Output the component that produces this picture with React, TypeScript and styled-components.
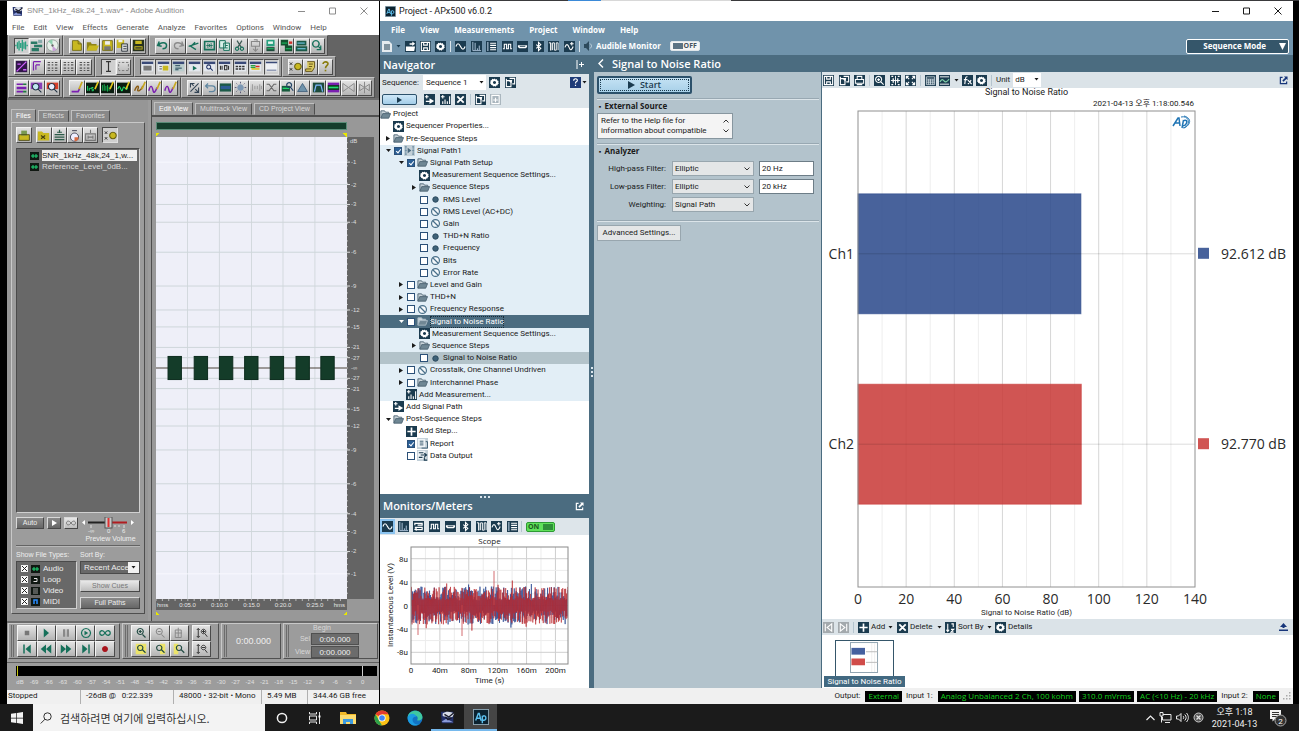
import React from 'react';
import styled, { createGlobalStyle, css } from 'styled-components';

const UI = 'Roboto, "Noto Sans CJK KR", sans-serif';
const HEAD = '"Open Sans", "Noto Sans CJK KR", sans-serif';
const OLD = '"Liberation Sans", "Noto Sans CJK KR", sans-serif';

const Global = createGlobalStyle`
  * { box-sizing: border-box; }
  body { margin: 0; background: #000; font-family: ${UI}; font-size: 8px; line-height: 12px; color: #1a1a1a; overflow: hidden; }
  button, input, select { font: inherit; color: inherit; margin: 0; padding: 0; border-radius: 0; }
  svg { display: block; flex: none; }
  h1, h2, p, ul { margin: 0; padding: 0; font: inherit; }
  ul { list-style: none; }
  a { color: inherit; text-decoration: none; }
`;

/* ---------- icons ---------- */

type Stroke = [d: string, color: string, width?: number];

const T = '#16705a';
const Y = '#c8b820';
const K = '#16202a';
const P = '#7a1fb0';
const N = '#1c7a3c';
const L = '#20e070';

const toolArt: Record<string, Stroke[]> = {
  wave: [['M1 7v2M3 4v8M5 2v12M7 5v6M9 1v14M11 4v8M13 3v10M15 7v2', '#2aa080', 1.6]],
  multi: [['M1 3h8v3H1zM5 7h10v3H5zM2 11h9v4H2z', '#2a7a66'], ['M10 1h5v4h-5z', '#8aa']],
  cd: [['M8 1a7 7 0 1 0 .01 0z', '#e8f0ea'], ['M8 1a7 7 0 1 0 .01 0z', '#8a9a90', 1], ['M8 8L3 3a7 7 0 0 1 5-2z', '#8fd0b0'], ['M8 8l5 5a7 7 0 0 1-5 2z', '#c9a0d8'], ['M8 6.500a1.500 1.500 0 1 0 .01 0z', '#666']],
  doc: [['M3 2h7l4 4v8H3z', Y], ['M3 2h7l4 4v8H3zM10 2v4h4', '#6c6410', 1]],
  folder: [['M1 4h5l1 2h6v8H1z', '#8f8418'], ['M4 8h12l-3 6H1z', Y]],
  save: [['M2 2h12v12H2z', Y], ['M5 2h6v5H5z', '#eee'], ['M4 9h8v5H4z', '#777'], ['M2 2h12v12H2z', '#6c6410', 1]],
  saveAs: [['M1 1h9v10H1z', Y], ['M3 1h5v3H3z', '#eee'], ['M7 6h7v9H7z', '#ddd'], ['M7 6h7v9H7zM9 9h4M9 12h4', K, 1]],
  saveAll: [['M1 1h14v14H1z', '#26301c'], ['M4 2h8v4H4zM3 9h10v4H3z', Y], ['M4 11h8', K, 1.5]],
  undo: [['M4 3L2 8l5 1M3 8c3-5 10-4 10 0 0 3-3 4-5 4', T, 1.8]],
  redo: [['M12 3l2 5-5 1M13 8c-3-5-10-4-10 0 0 3 3 4 5 4', '#8a8a8a', 1.6]],
  snip: [['M2 9l12-4M3 8l8 5M10 4l-5 5', T, 1.7]],
  trim: [['M2 3h12v10H2z', T, 2], ['M4 8h8M6 5v6M8 6v4M10 5v6', T, 1]],
  copy: [['M2 2h7v9H2zM7 5h7v9H7z', '#d8f0e8'], ['M2 2h7v9H2zM7 5h7v9H7zM9 8h3M9 11h3', T, 1.2]],
  cut: [['M5 2l5 8M11 2L6 10', '#3f5a55', 1.5], ['M5 10a2 2 0 1 0 .01 0zM11 10a2 2 0 1 0 .01 0z', T, 1.4]],
  paste: [['M3 3h10v6H3zM6 1h4v3M8 9v5M5 12l3 3 3-3', '#888', 1.3]],
  pasteNew: [['M3 1h10v8H3z', '#29a080'], ['M5 3h6v3H5z', '#e8f8f0'], ['M3 10h10v5H3z', '#1c4a3a'], ['M4 12h8', L, 1]],
  mix: [['M1 1h9v7H1zM6 8h9v7H6z', '#14502f'], ['M2 5h7M7 12h7', L, 1], ['M11 3h4v3h-4z', '#d0302a']],
  convert: [['M2 2h12v6H2zM1 9h14v6H1z', '#1c5a48'], ['M3 5h9M3 12h10', '#7fd8ff', 1.2]],
  zoomSel: [['M6 2a4 4 0 1 0 .01 0z', T, 1.8], ['M9 9l3 3M12 8v5H7', T, 1.5]],
  levels: [['M1 1h14v14H1z', '#31164a'], ['M2 14L14 2M3 5h4M10 12h4', '#d060ff', 1.6]],
  corner: [['M3 2h9M3 2v11M6 6h5M6 6v6', P, 1.4]],
  grid: [['M2 3h3M7 3h2M11 3h3M2 6h3M7 6h2M11 6h3M2 10h3M7 10h2M11 10h3M2 13h3M7 13h2M11 13h3', '#555', 1.3]],
  beam: [['M5 2h6M5 14h6M8 2v12', '#333', 1.4]],
  marquee: [['M2 3h2M6 3h3M11 3h3M2 13h2M6 13h3M11 13h3M2 5v3M14 5v3M2 10v2M14 10v2', '#777', 1.2]],
  win: [['M1 2h14v12H1z', '#e4e8ee'], ['M1 2h14v3H1z', '#3a4a78'], ['M3 7h10v6H3z', '#777']],
  winY: [['M1 2h14v12H1z', '#e4e8ee'], ['M1 2h14v3H1z', '#3a4a78'], ['M7 7h7v6H7z', Y], ['M3 8h3M3 11h3', '#777', 1.5]],
  winK: [['M1 2h14v12H1z', '#b9cccc'], ['M1 2h14v3H1z', '#3a4a78'], ['M4 7h6M4 10h8M4 12h4', '#245', 1.2]],
  winPlay: [['M1 2h14v12H1z', '#e4e8ee'], ['M1 2h14v3H1z', '#3a4a78'], ['M6 7l5 3-5 3z', T]],
  winZoom: [['M1 2h14v12H1z', '#e4e8ee'], ['M1 2h14v3H1z', '#3a4a78'], ['M7 6a2.500 2.500 0 1 0 .01 0zM9 10l3 3', '#236', 1.3]],
  winNum: [['M1 2h14v12H1z', '#e4e8ee'], ['M1 2h14v3H1z', '#3a4a78'], ['M3 7v5M5 7v5M8 7v5h3V7zM13 7v5', '#333', 1.4]],
  winDots: [['M1 2h14v12H1z', '#e4e8ee'], ['M1 2h14v3H1z', '#3a4a78'], ['M2 8h3M6 8h3M10 8h3M2 11h3M6 11h3M10 11h3', '#333', 2]],
  winBars: [['M1 2h14v12H1z', '#e4e8ee'], ['M1 2h14v3H1z', '#3a4a78'], ['M2 7h6M2 9h6', '#2aa040', 1.5], ['M8 8h5', '#d83020', 2], ['M3 11h10', '#d8c020', 2]],
  winLine: [['M1 2h14v12H1z', '#eef0f4'], ['M1 2h14v2H1zM2 12h12v1H2z', '#3a4a78']],
  gears: [['M1 3l3 3M4 3L1 6M1 10l3 3M4 10l-3 3', '#333', 1.2], ['M11 4a4 4 0 1 0 .01 0z', Y], ['M11 4a4 4 0 1 0 .01 0z', '#6c6410', 1.3]],
  script: [['M4 2h9v7l-3 5H2v-3h2z', '#d8c860'], ['M4 2h9v7l-3 5H2v-3h7M6 5h5M6 8h4', '#5c4a10', 1.1]],
  help: [['M5 5c0-4 7-3 6 0-.5 2-3 2-3 5', '#8a7d10', 2], ['M7 12h2v2H7z', '#8a7d10']],
  tracks: [['M2 3h8v2H2zM2 7h12v3H2zM2 12h8v2H2z', P], ['M10 3h4v2h-4zM10 12h4v2h-4z', N]],
  zoomP: [['M1 2h14v8H1z', '#8a40b8'], ['M7 3a4 4 0 1 0 .01 0z', '#bfe8f0'], ['M7 3a4 4 0 1 0 .01 0zM10 10l4 4', '#234', 1.3]],
  zoomR: [['M1 2h14v8H1z', '#d8402a'], ['M7 3a4 4 0 1 0 .01 0z', '#e8f0ff'], ['M7 3a4 4 0 1 0 .01 0zM10 10l4 4', '#234', 1.3]],
  pen: [['M2 13h8l2-4', P, 2], ['M15 1l-4 9', '#c8a820', 2]],
  penTxt: [['M0 2h16v13H0z', '#0a1c10'], ['M2 6v6M4 9v3M4 9h2M9 8H7v2h2v2H7', L, 1.2], ['M15 1l-4 9', '#e8c820', 2]],
  penDense: [['M0 2h16v13H0z', '#0a1c10'], ['M2 5v7M4 4v8M6 6v6M8 5v8M10 7v5', '#18b050', 1.2], ['M15 1l-4 9', '#e8c820', 2]],
  penWave: [['M0 2h16v13H0z', '#0a1c10'], ['M1 10c3-10 4 8 6 0s4 6 6-2', L, 1.3], ['M15 1l-4 9', '#e8c820', 2]],
  penO: [['M2 12c3-8 6-6 4-2s5 2 6-4', '#8a5a10', 1.7], ['M15 1l-4 9', '#c8a820', 2]],
  penV: [['M1 12c2-8 4-6 5-1s3 3 5-3', P, 1.8], ['M15 1l-4 9', '#c8a820', 2]],
  arrows: [['M3 13L13 3M4 3l3 3M9 10l4 4M13 8v6H8M3 8V3h5', '#345', 1.3]],
  back: [['M2 6h8c5 0 5 7 0 7H6M5 3L2 6l3 3', '#5f86a0', 1.6]],
  block: [['M1 3h14v10H1z', '#1c5a48'], ['M2 6h12v4H2z', '#2c5c94']],
  spark: [['M8 4a4 4 0 1 0 .01 0z', '#7c98b4'], ['M8 1v2M8 13v2M1 8h2M13 8h2M3 3l1 1M12 12l1 1M13 3l-1 1M4 12l-1 1', '#446', 1]],
  arcs: [['M3 4v8M6 6v4M9 6v4M12 4v8M14 6v4', '#999', 1.2]],
  cross: [['M2 4h3l6 8h3M2 12h3l6-8h3', '#666', 1.3]],
  waveS: [['M1 6h10v7H1z', '#165a3c'], ['M2 9h8', L, 1.5], ['M10 2a3 3 0 1 0 .01 0zM12 8l3 4', '#246', 1.5]],
  tri: [['M8 3l6 10H2z', '#6f93ab'], ['M8 3l6 10H2z', '#3a5a78', 1]],
  trap: [['M1 2h14v12H1z', '#1c4a3a'], ['M3 13l2-8h6l2 8', '#7fb8ff', 1.5]],
  band: [['M1 2h14v12H1z', P], ['M1 5h14v6H1z', '#0f3a22'], ['M2 8h12', L, 2]],
  bow: [['M1 3l7 5 7-5v10L8 8l-7 5z', '#8c8c8c', 1.2]],
  bowUp: [['M2 4l6 4 6-4v8L8 8l-6 4zM8 1v14', '#888', 1.2]],
  open: [['M1 7h13v7H1z', Y], ['M4 2h7v6H4z', '#7a9a50'], ['M1 7h13v7H1z', '#444010', 1]],
  importF: [['M1 3h5l2 2h7v9H1z', Y], ['M5 8l5 4M10 8l-5 4', '#444010', 1.3]],
  down: [['M8 1v4M5 4h6M2 7h12M2 10h12M2 13h12', '#2c5c48', 1.5]],
  orb: [['M8 5a5 5 0 1 0 .01 0z', '#eef'], ['M8 5a5 5 0 1 0 .01 0zM5 2h6', '#445', 1.2], ['M8 10h5a5 5 0 0 1-5 5z', '#d86a40']],
  insert: [['M8 1v4M2 6h12v8H2zM5 10h6M5 8v4M11 8v4', '#777', 1.3]],
  stop: [['M5 5h6v6H5z', '#777']],
  play: [['M5 2l7 6-7 6z', T]],
  pause: [['M4 3h3v10H4zM9 3h3v10H9z', '#888']],
  playO: [['M8 2a6 6 0 1 0 .01 0z', T, 1.6], ['M6 5l5 3-5 3z', T]],
  loop: [['M8 8c-3-5-7-3-7 0s4 5 7 0 7-3 7 0-4 5-7 0z', T, 1.7]],
  first: [['M3 2h2v12H3zM13 2v12L6 8z', T]],
  rew: [['M8 2v12L1 8zM15 2v12L8 8z', T]],
  fwd: [['M1 2v12l7-6zM8 2v12l7-6z', T]],
  last: [['M11 2h2v12h-2zM3 2v12l7-6z', T]],
  rec: [['M8 4a4 4 0 1 0 .01 0z', '#a8141c']],
  zIn: [['M7 2a4 4 0 1 0 .01 0zM10 10l4 4M5 6h4M7 4v4', '#244c44', 1.6]],
  zOut: [['M7 2a4 4 0 1 0 .01 0zM10 10l4 4M5 6h4', '#888', 1.4]],
  zFull: [['M3 4h8v10H3zM7 1v12M3 8h9', '#888', 1.3]],
  zSel: [['M1 1h14v14H1z', '#ece46a'], ['M7 3a3.500 3.500 0 1 0 .01 0zM10 9l4 4', '#244c44', 1.6]],
  zSelR: [['M8 1h7v14H8z', '#ece46a'], ['M7 3a3.500 3.500 0 1 0 .01 0zM10 9l4 4', '#244c44', 1.6]],
  zSelL: [['M1 1h6v14H1z', '#ece46a'], ['M8 3a3.500 3.500 0 1 0 .01 0zM11 9l4 4', '#244c44', 1.6]],
  zVIn: [['M3 2v12M1 4l2-2 2 2M1 12l2 2 2-2M10 3a3 3 0 1 0 .01 0zM12 9l3 4M8 6h4M10 4v4', '#333', 1.3]],
  zVOut: [['M3 2v12M1 4l2-2 2 2M1 12l2 2 2-2M10 3a3 3 0 1 0 .01 0zM12 9l3 4M8 6h4', '#333', 1.3]],
};

const ToolIcon = ({ name, size = 13 }: { name: string; size?: number }) => (
  <svg width={size} height={size} viewBox="0 0 16 16" aria-hidden="true">
    {toolArt[name].map(([d, color, width], i) => (
      <path key={i} d={d} fill={width ? 'none' : color} stroke={width ? color : 'none'} strokeWidth={width} />
    ))}
  </svg>
);

const GEAR = 'M6 1.500l.8 1.300 1.500-.5.7 1.400 1.500.6-.5 1.400.8 1.300-1.300.8v1.300l-1.500.3-.9 1.200L6 9.800l-1.300.5-.9-1.200-1.500-.3V7.500L1 6.700l.8-1.300-.4-1.400 1.500-.6.7-1.400 1.500.5zM6 4.300a1.700 1.700 0 1 0 .01 0z';

const darkArt: Record<string, Stroke[]> = {
  open: [['M1 6h10l-1 5H1zM5 2.500h3V.5L11 3 8 5.500V4H5z', '#fff']],
  save: [['M1.500 1.500h9v9h-9zM4 1.500v3h4v-3M4 10.500v-3h4v3', '#fff', 1.2]],
  gear: [[GEAR, '#fff']],
  sine: [['M1 6c1.500-4 3-4 5 0s3.500 4 5 0', '#fff', 1.3]],
  fft: [['M2 1v9.500h9M4.500 10V2M7 10V8M9 10V5', '#b5cbe0', 1]],
  list: [['M2 1v10', '#9db4c8', 1.4], ['M4.500 2.500H11M4.500 4.800H11M4.500 7.200H11M4.500 9.500H11', '#fff', 1.2]],
  square: [['M1 8.500h1.500v-5h2.500v5h2v-5h2.500v5H11', '#fff', 1.2]],
  port: [['M1 4.500h10v2L9.500 8h-7L1 6.500z', '#fff'], ['M3 5.800h6', '#1b3b4f', 1]],
  bt: [['M3.500 4l5 4L6 10.500v-9L8.500 4l-5 4', '#fff', 1.2]],
  pulses: [['M1 2h2v8.500M3 2v8M5 2v8M5 2h2v8M9 10V2h2v8M7 10h2', '#fff', 1]],
  sineUp: [['M1 7c1.500-4 3-4 4.500 0s3 3 4.500-1', '#fff', 1.2], ['M8.500 1v4M6.500 3h4', '#fff', 1.2]],
  inout: [['M10 2.500H2v2M2 2.500h8v2H5M2 7h8v2.500H3', '#fff', 1.3], ['M4 7l-3 2 3 2z', '#fff']],
  copyp: [['M1.500 2v8.500h5V4h-5M5 1.500h5.500v6H8', '#fff', 1.2], ['M4 4l4-1-1 4z', '#fff']],
  path: [['M1 3h4M3 1v4M2 8h5', '#fff', 1.3], ['M6 4.500L11 7.500 6 11z', '#fff']],
  meas: [['M1 3h4M3 1v4M3 11V8M5.500 11V6M8 11V8M10.500 11V2.500', '#fff', 1.2]],
  x: [['M2.500 2.500l7 7M9.500 2.500l-7 7', '#fff', 2]],
  plus: [['M6 1.500v9M1.500 6h9', '#fff', 1.8]],
  pagePlus: [['M2 1.500h8v9H2zM6 4v5M3.500 6.500h5', '#fff', 1.2]],
  print: [['M3.500 5V1.500h5V5M1.500 5h9v4h-9zM3 10.500h6', '#fff', 1.1]],
  zoom: [['M5 1.500a3.300 3.300 0 1 0 .01 0zM7.500 7.500l3 3M3.500 5h3M5 3.500v3', '#fff', 1.2]],
  fit: [['M1 6h10M6 1v10', '#fff', 1], ['M3.500 3.500v5M8.500 3.500v5', '#fff', 1.4], ['M1.500 1.500h2M8.500 1.500h2M1.500 10.500h2M8.500 10.500h2', '#fff', 1.2]],
  expand: [['M1.500 1.500l3 3M10.500 1.500l-3 3M1.500 10.500l3-3M10.500 10.500l-3-3M1.500 4V1.500H4M8 1.500h2.500V4M1.500 8v2.500H4M8 10.500h2.500V8', '#fff', 1.2]],
  table: [['M1.500 2h9v8.500h-9zM1.500 4.500h9M1.500 6.500h9M1.500 8.500h9M4 4.500v6M6 4.500v6M8.500 4.500v6', '#dfe9ef', 0.8]],
  graph: [['M1 2h10M1 10h10', '#fff', 1], ['M1 7.500c2-3 3-3 4.500-1s3 1 5.500-2', '#7fd0a8', 1.3]],
  fx: [['M6 2c-2-.5-2 1-2.300 3L3 10M2 5h4M6.500 5.500l4 4.500M10 5.500L6.500 10', '#fff', 1.2]],
  sort: [['M3 2v8M1.500 8.500L3 10.500l1.500-2M7 2h2v3.500M6.500 8h3l-3 3h3', '#fff', 1.2]],
  first: [['M2.500 2v8M9.500 2v8L4.500 6z', '#fff', 1.2]],
  last: [['M9.500 2v8M2.500 2v8l5-4z', '#fff', 1.2]],
  help: [['M4 4c0-3 4.500-2.500 4 0-.3 1.200-2 1-2 3M6 8.500v1.200', '#fff', 1.3]],
  report: [['M1 1h8v9H1z', '#eef3f6'], ['M3 3.500h4M3 5.500h4M3 7.500h4M9.500 4h2v7H5', '#35556b', 1]],
  data: [['M1 1h8v9H1z', '#eef3f6'], ['M2 3h5M2 8h4M4 5.500h6M8 3.500l2.500 2L8 7.500M8 8v3h3', '#1b3b4f', 1.2]],
  sigpath: [['M1 2h2M1 6h2M1 10h2M11 2H9M11 6H9M11 10H9M2 1v10M10 1v10', '#6f8ea3', 1], ['M4 3l4 3-4 3z', '#49687d']],
};

const DarkSquare = styled.span<{ $bg?: string; $ring?: boolean }>`
  display: inline-grid;
  place-items: center;
  flex: none;
  width: 11px;
  height: 11px;
  background: ${p => p.$bg ?? '#1b3b4f'};
  ${p => p.$ring && css`box-shadow: 0 0 0 2px #8cc4f0;`}
`;

const Dark = ({ name, bg, ring }: { name: string; bg?: string; ring?: boolean }) => (
  <DarkSquare $bg={bg} $ring={ring}>
    <svg width="11" height="11" viewBox="0 0 12 12" aria-hidden="true">
      {darkArt[name].map(([d, color, width], i) => (
        <path key={i} d={d} fillRule="evenodd" fill={width ? 'none' : color} stroke={width ? color : 'none'} strokeWidth={width} />
      ))}
    </svg>
  </DarkSquare>
);

const FolderIcon = ({ light }: { light?: boolean }) => (
  <svg width="11" height="11" viewBox="0 0 12 12" aria-hidden="true">
    <path d="M1 10V2h4l1 1.500h3.500V5" fill="#c9d3d9" stroke={light ? '#a9bac5' : '#4f6675'} />
    <path d="M1 10l2-5h8.500L9.500 10z" fill="#6f8794" stroke={light ? '#a9bac5' : '#4f6675'} />
  </svg>
);
const DotIcon = () => (
  <svg width="11" height="11" viewBox="0 0 12 12" aria-hidden="true"><circle cx="6" cy="6" r="3" fill="#3f6278" stroke="#27465a" /></svg>
);
const NoneIcon = () => (
  <svg width="11" height="11" viewBox="0 0 12 12" aria-hidden="true"><circle cx="6" cy="6" r="4.300" fill="#f4f8fb" stroke="#4a708a" strokeWidth="1.300" /><path d="M3 3l6 6" stroke="#4a708a" strokeWidth="1.300" /></svg>
);
const Caret = ({ color = '#1a1a1a' }: { color?: string }) => (
  <svg width="5" height="3" viewBox="0 0 5 3" aria-hidden="true"><path d="M.5 0h4L2.500 2.500z" fill={color} /></svg>
);
const PopOut = ({ color }: { color: string }) => (
  <svg width="9" height="9" viewBox="0 0 10 10" aria-hidden="true">
    <path d="M4 1.500H1.500v7h7V6" fill="none" stroke={color} strokeWidth="1.300" />
    <path d="M5.500.5H9.500v4L8.200 3.200 5 6.400 3.700 5.100 6.900 1.900z" fill={color} />
  </svg>
);
const ApLogo = ({ size }: { size: number }) => (
  <svg width={size} height={size} viewBox="0 0 18 18" aria-hidden="true">
    <rect x=".5" y=".5" width="17" height="17" fill="#0b2230" stroke="#8fa9b8" />
    <path d="M3 13l3-8h1l2 8M4 10.500h4M10.500 16V7.500M10.500 9c1-2 4-1.800 4 1s-3 3.500-4 1.800" fill="none" stroke="#5cc0ee" strokeWidth="1.600" />
  </svg>
);
const AuditionLogo = ({ size }: { size: number }) => (
  <svg width={size} height={size} viewBox="0 0 18 18" aria-hidden="true">
    <path d="M1 3h14v13H2z" fill="#23306a" />
    <path d="M2 14l5-3 8 4H3z" fill="#8a9ad8" />
    <path d="M3 5c4-3 9-2 13 0l-2 4c-4 1-8 0-11-1z" fill="#d8dde8" />
    <path d="M5 6l5 3 6-5M6 9l3 3 4-2" fill="none" stroke="#1a1c2c" strokeWidth="1.600" />
  </svg>
);
const WindowGlyph = ({ kind }: { kind: 'min' | 'max' | 'close' }) => (
  <svg width="8" height="8" viewBox="0 0 8 8" aria-hidden="true">
    <path d={{ min: 'M0 4.500h7', max: 'M.5 1h6v6h-6z', close: 'M.5.5l7 7M7.500.5l-7 7' }[kind]} fill="none" stroke="currentColor" />
  </svg>
);

/* ---------- desktop ---------- */

const Desktop = styled.div`
  display: flex;
  flex-direction: column;
  height: 100vh;
  background: #000;
`;
const TopEdge = styled.div`
  flex: none;
  height: 1px;
  background: linear-gradient(90deg, #3a3a3c 0 568px, #3b8ad8 568px 601px, #d8d8d8 601px 731px, #3a3a3c 731px);
`;
const Windows = styled.main`
  flex: 1;
  min-height: 0;
  display: flex;
  padding: 0 6px 0 7px;
  gap: 1px;
`;
const TitleBar = styled.header<{ $dim?: boolean; $h: number }>`
  flex: none;
  display: flex;
  align-items: center;
  gap: 3px;
  height: ${p => p.$h}px;
  padding: 0 11px 0 5px;
  background: #fff;
  color: ${p => (p.$dim ? '#8c8c8c' : '#1a1a1a')};
  font-size: ${p => (p.$dim ? 8 : 9)}px;
`;
const WindowButtons = styled.div`
  display: flex;
  gap: 23px;
  margin-left: auto;
`;
const PlainButton = styled.button`
  display: inline-flex;
  align-items: center;
  gap: 2px;
  flex: none;
  border: 0;
  background: none;
  cursor: pointer;
`;
const WinControls = () => (
  <WindowButtons>
    <PlainButton aria-label="Minimize"><WindowGlyph kind="min" /></PlainButton>
    <PlainButton aria-label="Maximize"><WindowGlyph kind="max" /></PlainButton>
    <PlainButton aria-label="Close"><WindowGlyph kind="close" /></PlainButton>
  </WindowButtons>
);

/* ---------- Audition ---------- */

const Audition = styled.section`
  flex: 0 0 372px;
  display: flex;
  flex-direction: column;
  min-height: 0;
  background: #9c9c9c;
  font-family: ${OLD};
`;
const OldMenu = styled.nav`
  flex: none;
  display: flex;
  align-items: center;
  gap: 9px;
  height: 15px;
  padding-left: 5px;
  background: #fff;
  color: #555;
  font-family: ${UI};
  font-size: 8px;
`;
const ToolRows = styled.div`
  flex: none;
  background: #646464;
`;
const ToolRow = styled.div`
  display: flex;
  height: 21px;
  padding-left: 1px;
`;
const ToolPanel = styled.div<{ $w: number }>`
  display: flex;
  align-items: center;
  width: ${p => p.$w}px;
  padding: 0 2px 0 5px;
  background: #a0a0a0;
  border: 1px solid;
  border-color: #c4c4c4 #505050 #505050 #c4c4c4;
`;
const ToolButton = styled.button<{ $down?: boolean; $h?: number }>`
  flex: 1;
  min-width: 0;
  height: ${p => p.$h ?? 16}px;
  display: grid;
  place-items: center;
  overflow: hidden;
  border: 1px solid;
  border-color: ${p => (p.$down ? '#4a4a4a #e0e0e0 #e0e0e0 #4a4a4a' : '#f4f4f4 #4a4a4a #4a4a4a #f4f4f4')};
  background: ${p => (p.$down ? '#cfcfcf' : 'linear-gradient(#e2e2e2, #b4b4b4)')};
`;
const OldMain = styled.div`
  flex: 1;
  min-height: 0;
  display: flex;
  border-top: 2px solid #6e6e6e;
`;
const FilesColumn = styled.div`
  flex: 0 0 141px;
  display: flex;
  flex-direction: column;
  padding: 9px 3px 7px 4px;
  background: #969696;
`;
const Tabs = styled.div`
  display: flex;
  align-items: flex-end;
  gap: 2px;
  flex: none;
`;
const Tab = styled.button<{ $on?: boolean }>`
  flex: none;
  height: ${p => (p.$on ? 13 : 12)}px;
  padding: 0 4px;
  border: 1px solid;
  border-color: #c0c0c0 #4e4e4e transparent #c0c0c0;
  background: ${p => (p.$on ? '#9a9a9a' : '#888')};
  color: ${p => (p.$on ? '#fff' : '#dadada')};
  font-size: 7px;
  line-height: 10px;
`;
const FilesPanel = styled.div`
  flex: 1;
  min-height: 0;
  display: flex;
  flex-direction: column;
  padding: 4px;
  border: 1px solid;
  border-color: #c8c8c8 #4e4e4e #4e4e4e #c8c8c8;
  background: #9c9c9c;
`;
const FileTools = styled.div`
  display: flex;
  gap: 4px;
  flex: none;
  height: 21px;
`;
const FileToolSet = styled.div<{ $w: number }>`
  display: flex;
  width: ${p => p.$w}px;
`;
const FileList = styled.ul`
  flex: 1;
  padding: 1px 2px 0 13px;
  border: 1px solid;
  border-color: #4a4a4a #d0d0d0 #d0d0d0 #4a4a4a;
  background: #686868;
`;
const FileItem = styled.li<{ $on?: boolean }>`
  display: flex;
  align-items: center;
  gap: 3px;
  height: 11px;
  color: #dcdcdc;
  font-size: 8px;
  line-height: 11px;
  white-space: nowrap;
  span { ${p => p.$on && css`flex: 1; background: #f0f0f0; color: #222;`} }
`;
const MiniIcon = ({ kind = 'wave' }: { kind?: string }) => (
  <svg width="9" height="8" viewBox="0 0 9 8" aria-hidden="true">
    <rect width="9" height="8" fill="#101812" />
    {kind === 'wave' && <path d="M1 4h7M3 2v4M6 2v4" stroke="#20d878" />}
    {kind === 'loop' && <path d="M3 2.500h3v3H2.500" stroke="#ddd" fill="none" />}
    {kind === 'video' && <path d="M2 2h5M2 4h5M2 6h5" stroke="#999" />}
    {kind === 'midi' && <path d="M3 6V2h3v4" stroke="#2a8cff" strokeWidth="1.500" fill="none" />}
  </svg>
);
const PreviewRow = styled.div`
  flex: none;
  display: flex;
  align-items: flex-start;
  gap: 3px;
  height: 34px;
  padding-top: 4px;
  border-bottom: 2px groove #b8b8b8;
`;
const OldButton = styled.button<{ $w?: number; $light?: boolean }>`
  flex: none;
  width: ${p => (p.$w ? `${p.$w}px` : '100%')};
  height: 12px;
  border: 1px solid;
  border-color: #d8d8d8 #484848 #484848 #d8d8d8;
  background: ${p => (p.$light ? 'linear-gradient(#e8e8e8, #bdbdbd)' : 'linear-gradient(#8a8a8a, #666)')};
  color: ${p => (p.$light ? '#777' : '#eee')};
  font-size: 7px;
  line-height: 10px;
`;
const VolumeBox = styled.div`
  flex: 1;
  color: #eee;
  font-size: 7px;
  line-height: 9px;
  text-align: center;
`;
const Options = styled.div`
  flex: none;
  display: grid;
  grid-template-columns: 61px 1fr;
  column-gap: 3px;
  padding-top: 2px;
  color: #eee;
  font-size: 7px;
`;
const TypeBox = styled.div`
  padding: 1px 4px;
  border: 1px solid;
  border-color: #4a4a4a #d0d0d0 #d0d0d0 #4a4a4a;
  background: #686868;
`;
const TypeLabel = styled.label`
  display: flex;
  align-items: center;
  gap: 3px;
  font-size: 8px;
  line-height: 11px;
`;
const XBox = styled.input`
  appearance: none;
  width: 7px;
  height: 7px;
  border: 1px solid #f2f2f2;
  background:
    linear-gradient(45deg, transparent 42%, #222 42% 58%, transparent 58%),
    linear-gradient(-45deg, transparent 42%, #222 42% 58%, transparent 58%), #fff;
`;
const SortStack = styled.div`
  display: flex;
  flex-direction: column;
  justify-content: space-between;
`;
const SelectWrap = styled.span<{ $w?: number; $h?: number; $right?: number }>`
  position: relative;
  display: block;
  flex: none;
  width: ${p => (p.$w ? `${p.$w}px` : '100%')};
  height: ${p => p.$h ?? 14}px;
  > svg { position: absolute; right: ${p => p.$right ?? 4}px; top: 50%; margin-top: -2px; pointer-events: none; }
`;
const BareSelect = styled.select<{ $bg: string; $border?: string; $pad?: number }>`
  appearance: none;
  width: 100%;
  height: 100%;
  padding: 0 0 0 ${p => p.$pad ?? 3}px;
  border: ${p => (p.$border ? `1px solid ${p.$border}` : '0')};
  background: ${p => p.$bg};
  font-size: 8px;
`;
const SortArrow = styled.span`
  position: absolute;
  right: 1px;
  top: 1px;
  display: grid;
  place-items: center;
  width: 11px;
  height: 11px;
  background: #f2f2f2;
  pointer-events: none;
`;

const EditColumn = styled.div`
  flex: 1;
  min-width: 0;
  display: flex;
  flex-direction: column;
  margin-left: 3px;
  padding: 2px 4px 0 2px;
  border-left: 1px solid #4e4e4e;
  background: #989898;
`;
const EditBody = styled.div`
  flex: 1;
  min-height: 0;
  display: grid;
  grid-template-columns: 1fr 27px;
  grid-template-rows: 8px 7px 1fr 11px 6px;
  margin: 0 -4px 0 -2px;
  padding: 5px 5px 5px 4px;
  border-top: 2px solid #505050;
`;
const Overview = styled.div`
  grid-column: 1;
  border: 1px solid #5a8c78;
  background: #143e2c;
`;
const Marks = styled.div<{ $low?: boolean }>`
  grid-column: 1;
  height: 4px;
  align-self: ${p => (p.$low ? 'center' : 'end')};
  background:
    linear-gradient(${p => (p.$low ? '45deg' : '135deg')}, #e8e800 50%, transparent 50%) left / 4px 4px no-repeat,
    linear-gradient(${p => (p.$low ? '-45deg' : '-135deg')}, #e8e800 50%, transparent 50%) right / 4px 4px no-repeat;
`;
const FillSvg = styled.svg`
  width: 100%;
  height: 100%;
  min-height: 0;
  overflow: visible;
`;
const WaveCell = styled.div<{ $bg: string; $col: number; $row: number }>`
  grid-column: ${p => p.$col};
  grid-row: ${p => p.$row};
  min-height: 0;
  background: ${p => p.$bg};
  overflow: hidden;
`;

const dbMarks = [1, 2, 3, 4, 6, 9, 12, 15, 21, 27];
const level = (db: number) => 50 * Math.pow(10, -db / 20);
const timeMarks = [16.5, 33.2, 50, 66.5, 83.2];
const pulses = [6.3, 20, 33.2, 46.4, 59.8, 73.3, 86.3];

const WaveView = () => (
  <EditBody>
    <Overview />
    <Marks />
    <WaveCell $bg="#eeeff8" $col={1} $row={3}>
      <FillSvg>
        {timeMarks.map(x => <line key={x} x1={`${x}%`} x2={`${x}%`} y1="0" y2="100%" stroke="#d3d9de" />)}
        {dbMarks.map(db => (
          <g key={db} stroke={db === 1 ? '#f8f8ff' : '#ced6da'}>
            <line x1="0" x2="100%" y1={`${50 - level(db)}%`} y2={`${50 - level(db)}%`} />
            <line x1="0" x2="100%" y1={`${50 + level(db)}%`} y2={`${50 + level(db)}%`} />
          </g>
        ))}
        <line x1="0" x2="100%" y1="50%" y2="50%" stroke="#4a4238" />
        {pulses.map(x => <rect key={x} x={`${x}%`} y="47.500%" width="7%" height="5%" fill="#143c29" stroke="#0d2c1e" />)}
      </FillSvg>
    </WaveCell>
    <WaveCell $bg="#646464" $col={2} $row={3}>
      <FillSvg fontSize="6" fill="#dcdcdc" fontFamily={OLD}>
        <text x="3" y="6">dB</text>
        {dbMarks.flatMap(db => [-1, 1].map(s => (
          <g key={db * s}>
            <line x1="0" x2="3" y1={`${50 + s * level(db)}%`} y2={`${50 + s * level(db)}%`} stroke="#ddd" />
            <text x="4" y={`${50 + s * level(db)}%`} dy="2">-{db}</text>
          </g>
        )))}
        {Array.from({ length: 80 }, (_, i) => <line key={i} x1="0" x2="1" y1={`${i * 1.25}%`} y2={`${i * 1.25}%`} stroke="#bbb" />)}
        <text x="4" y="50%" dy="2">-∞</text>
      </FillSvg>
    </WaveCell>
    <WaveCell $bg="#646464" $col={1} $row={4}>
      <FillSvg fontSize="6" fill="#e4e4e4" fontFamily={OLD}>
        {Array.from({ length: 30 }, (_, i) => <line key={i} x1={`${i * 3.33}%`} x2={`${i * 3.33}%`} y1="0" y2="2" stroke="#bbb" />)}
        <text x="1" y="8">hms</text>
        {timeMarks.map((x, i) => <text key={x} x={`${x}%`} y="8" textAnchor="middle">{`0:${String((i + 1) * 5).padStart(2, '0')}.0`}</text>)}
        <text x="100%" dx="-2" y="8" textAnchor="end">hms</text>
      </FillSvg>
    </WaveCell>
    <Marks $low />
  </EditBody>
);

const Transport = styled.div`
  flex: none;
  display: flex;
  gap: 2px;
  height: 41px;
  padding: 0 1px 3px;
  border-top: 2px solid #6a6a6a;
`;
const TransportPanel = styled.div<{ $w?: number }>`
  flex: ${p => (p.$w ? `0 0 ${p.$w}px` : '1')};
  display: flex;
  align-items: center;
  gap: 3px;
  padding: 0 3px 0 2px;
  border: 1px solid;
  border-color: #c8c8c8 #505050 #505050 #c8c8c8;
`;
const Grip = styled.span`
  flex: none;
  width: 3px;
  height: 32px;
  border-left: 1px solid #6c6c6c;
  border-right: 1px solid #6c6c6c;
`;
const ButtonGrid = styled.div<{ $cols: number; $w: number }>`
  display: grid;
  grid-template-columns: repeat(${p => p.$cols}, 1fr);
  width: ${p => p.$w}px;
`;
const TimeText = styled.output`
  margin: auto;
  color: #eee;
  font-size: 9px;
`;
const SelView = styled.div`
  display: grid;
  grid-template-columns: 18px 48px;
  gap: 1px;
  color: #d8d8d8;
  font-size: 7px;
  line-height: 8px;
  align-items: center;
  text-align: right;
`;
const SelHead = styled.span`
  grid-column: 1 / -1;
  padding-right: 28px;
`;
const TimeField = styled.input`
  width: 48px;
  height: 12px;
  border: 1px solid #505050;
  background: #6c6c6c;
  color: #f0f0f0;
  font-size: 8px;
  text-align: center;
`;
const Meter = styled.div`
  flex: none;
  height: 28px;
  padding: 3px 2px 0 9px;
  border-top: 1px solid #606060;
`;
const MeterBar = styled.div`
  height: 10px;
  background: linear-gradient(90deg, #000 1px, #c8c810 1px 2px, #000 2px 346px, #ccc 346px 347px, #000 347px);
`;
const MeterScale = styled.div`
  display: flex;
  justify-content: space-between;
  margin-right: 10px;
  color: #e0e0e0;
  font-size: 6px;
  line-height: 12px;
  span { flex: 0 0 8px; text-align: center; white-space: nowrap; }
`;
const OldStatus = styled.footer`
  flex: none;
  display: flex;
  gap: 2px;
  height: 14px;
  background: #f0f0f0;
  font-family: ${UI};
  font-size: 8px;
`;
const StatusCell = styled.span<{ $w: number }>`
  width: ${p => p.$w}px;
  padding-left: 3px;
  border-right: 1px solid #b0b0b0;
  white-space: nowrap;
  &:first-child { padding-left: 1px; }
  &:last-child { border: 0; }
`;

const toolRows: { w: number; icons: string; down?: number }[][] = [
  [{ w: 55, icons: 'wave multi cd', down: 1 }, { w: 86, icons: 'doc folder save saveAs saveAll' }, { w: 179, icons: 'undo redo snip trim copy cut paste pasteNew mix convert zoomSel' }],
  [{ w: 87, icons: 'levels corner grid grid grid' }, { w: 39, icons: 'beam marquee', down: 1 }, { w: 148, icons: 'win winY winK winPlay winZoom winNum winDots winBars winLine', down: 9 }, { w: 54, icons: 'gears script help' }],
  [{ w: 55, icons: 'tracks zoomP zoomR' }, { w: 118, icons: 'pen penTxt penDense penWave penO penV penV' }, { w: 194, icons: 'arrows back block spark arcs cross waveS tri trap band bow bowUp' }],
];

const AuditionWindow = () => (
  <Audition>
    <TitleBar $dim $h={19}><AuditionLogo size={12} /><h1>SNR_1kHz_48k.24_1.wav* - Adobe Audition</h1><WinControls /></TitleBar>
    <OldMenu>
      {['File', 'Edit', 'View', 'Effects', 'Generate', 'Analyze', 'Favorites', 'Options', 'Window', 'Help'].map(m => <PlainButton key={m}>{m}</PlainButton>)}
    </OldMenu>
    <ToolRows>
      {toolRows.map((row, r) => (
        <ToolRow key={r}>
          {row.map((panel, p) => (
            <ToolPanel key={p} $w={panel.w}>
              {panel.icons.split(' ').map((name, i) => (
                <ToolButton key={i} aria-label={name} $down={i < (panel.down ?? 0)}><ToolIcon name={name} /></ToolButton>
              ))}
            </ToolPanel>
          ))}
        </ToolRow>
      ))}
    </ToolRows>
    <OldMain>
      <FilesColumn>
        <Tabs><Tab $on>Files</Tab><Tab>Effects</Tab><Tab>Favorites</Tab></Tabs>
        <FilesPanel>
          <FileTools>
            <FileToolSet $w={16}><ToolButton aria-label="Open"><ToolIcon name="open" /></ToolButton></FileToolSet>
            <FileToolSet $w={62}>
              {['importF', 'down', 'orb', 'insert'].map(n => <ToolButton key={n} aria-label={n}><ToolIcon name={n} /></ToolButton>)}
            </FileToolSet>
            <FileToolSet $w={16}><ToolButton $down aria-label="Options"><ToolIcon name="gears" /></ToolButton></FileToolSet>
          </FileTools>
          <FileList>
            <FileItem $on><MiniIcon /><span>SNR_1kHz_48k,24_1,w...</span></FileItem>
            <FileItem><MiniIcon /><span>Reference_Level_0dB...</span></FileItem>
          </FileList>
          <PreviewRow>
            <OldButton $w={28}>Auto</OldButton>
            <OldButton $w={14} aria-label="Play"><svg width="12" height="8" viewBox="0 0 12 8"><path d="M4 1l5 3-5 3z" fill="#fff" /></svg></OldButton>
            <OldButton $w={14} $light aria-label="Loop"><svg width="12" height="8" viewBox="0 0 12 8"><path d="M6 4C4 1 1.500 2 1.500 4S4 7 6 4s4.500-2 4.500 0S8 7 6 4z" fill="none" stroke="#777" /></svg></OldButton>
            <VolumeBox>
              <svg width="54" height="17" viewBox="0 0 54 17" aria-hidden="true">
                <path d="M4 3v5L1 5.500zM50 3v5l3-2.500z" fill="#fff" />
                <path d="M7 5.500h20" stroke="#222" strokeWidth="2" /><path d="M27 5.500h19" stroke="#b01c20" strokeWidth="2" />
                <path d="M10 8v3M43 8v3M34 8v2M38 8v2" stroke="#ddd" />
                <rect x="24" y="0" width="7" height="11" fill="#c8c8c8" stroke="#555" /><path d="M27.500 1v9" stroke="#e03030" strokeWidth="2" />
                <text x="7" y="16" fontSize="6" fill="#eee">-∞</text><text x="26" y="16" fontSize="6" fill="#eee">0</text><text x="41" y="16" fontSize="6" fill="#eee">6</text>
              </svg>
              Preview Volume
            </VolumeBox>
          </PreviewRow>
          <Options>
            <span>Show File Types:</span><label htmlFor="sort">Sort By:</label>
            <TypeBox>
              {[['wave', 'Audio'], ['loop', 'Loop'], ['video', 'Video'], ['midi', 'MIDI']].map(([k, t]) => (
                <TypeLabel key={t}><XBox type="checkbox" defaultChecked /><MiniIcon kind={k} />{t}</TypeLabel>
              ))}
            </TypeBox>
            <SortStack>
              <SelectWrap $h={13}>
                <BareSelect id="sort" $bg="#686868" $border="#4a4a4a"><option>Recent Access</option></BareSelect>
                <SortArrow><Caret /></SortArrow>
              </SelectWrap>
              <OldButton $light>Show Cues</OldButton>
              <OldButton>Full Paths</OldButton>
            </SortStack>
          </Options>
        </FilesPanel>
      </FilesColumn>
      <EditColumn>
        <Tabs><Tab $on>Edit View</Tab><Tab>Multitrack View</Tab><Tab>CD Project View</Tab></Tabs>
        <WaveView />
      </EditColumn>
    </OldMain>
    <Transport>
      <TransportPanel $w={112}>
        <Grip />
        <ButtonGrid $cols={5} $w={98}>
          {'stop play pause playO loop first rew fwd last rec'.split(' ').map(n => <ToolButton key={n} $h={16} aria-label={n}><ToolIcon name={n} size={12} /></ToolButton>)}
        </ButtonGrid>
      </TransportPanel>
      <TransportPanel $w={97}>
        <Grip />
        <ButtonGrid $cols={3} $w={58}>
          {'zIn zOut zFull zSel zSelR zSelL'.split(' ').map(n => <ToolButton key={n} $h={16} aria-label={n}><ToolIcon name={n} size={12} /></ToolButton>)}
        </ButtonGrid>
        <ButtonGrid $cols={1} $w={19}>
          <ToolButton $h={16} aria-label="Zoom in vertically"><ToolIcon name="zVIn" size={12} /></ToolButton>
          <ToolButton $h={16} aria-label="Zoom out vertically"><ToolIcon name="zVOut" size={12} /></ToolButton>
        </ButtonGrid>
      </TransportPanel>
      <TransportPanel $w={60}><Grip /><TimeText>0:00.000</TimeText></TransportPanel>
      <TransportPanel>
        <Grip />
        <SelView>
          <SelHead>Begin</SelHead>
          <label htmlFor="sel">Sel</label><TimeField id="sel" defaultValue="0:00.000" />
          <label htmlFor="view">View</label><TimeField id="view" defaultValue="0:00.000" />
        </SelView>
      </TransportPanel>
    </Transport>
    <Meter>
      <MeterBar />
      <MeterScale>
        <span>dB</span>
        {Array.from({ length: 24 }, (_, i) => <span key={i}>{i === 23 ? 0 : i * 3 - 69}</span>)}
      </MeterScale>
    </Meter>
    <OldStatus>
      <StatusCell $w={74}>Stopped</StatusCell>
      <StatusCell $w={91}>-26dB @ &nbsp; 0:22.339</StatusCell>
      <StatusCell $w={86}>48000 • 32-bit • Mono</StatusCell>
      <StatusCell $w={44}>5.49 MB</StatusCell>
      <StatusCell $w={60}>344.46 GB free</StatusCell>
    </OldStatus>
  </Audition>
);

/* ---------- APx500 ---------- */

const Apx = styled.section`
  flex: 1;
  min-width: 0;
  display: flex;
  flex-direction: column;
  background: #4b6c80;
`;
const MenuBand = styled.div`
  flex: none;
  height: 34px;
  display: flex;
  flex-direction: column;
  background: #7093ab;
  color: #fff;
  font-family: ${HEAD};
  font-weight: 700;
`;
const MenuRow = styled.nav`
  display: flex;
  align-items: center;
  gap: 15px;
  height: 18px;
  padding-left: 11px;
  font-size: 8px;
`;
const ToolLine = styled.div`
  display: flex;
  align-items: center;
  height: 14px;
  padding: 0 4px 0 2px;
`;
const Strip = styled.div<{ $w?: number; $ml?: number }>`
  flex: none;
  display: flex;
  align-items: center;
  justify-content: space-between;
  width: ${p => (p.$w ? `${p.$w}px` : 'auto')};
  margin-left: ${p => p.$ml ?? 0}px;
`;
const Sep = styled.span<{ $m?: number; $c?: string }>`
  flex: none;
  width: 1px;
  height: 11px;
  margin: 0 ${p => p.$m ?? 3}px;
  background: ${p => p.$c ?? '#b4c4ce'};
`;
const Toggle = styled.button<{ $on?: boolean; $ml: number }>`
  flex: none;
  display: flex;
  align-items: center;
  justify-content: space-between;
  width: ${p => (p.$on ? 29 : 30)}px;
  height: 10px;
  padding: 0 ${p => (p.$on ? 1 : 2)}px;
  margin-left: ${p => p.$ml}px;
  border: 1px solid ${p => (p.$on ? '#2d9a34' : '#dfe6ea')};
  border-radius: 2px;
  background: ${p => (p.$on ? '#5fe05a' : '#f4f4f4')};
  color: ${p => (p.$on ? '#1c5a20' : '#44525c')};
  font-family: ${HEAD};
  font-size: 7px;
  font-weight: 700;
  line-height: 8px;
  i { flex: none; width: 10px; height: 6px; background: ${p => (p.$on ? '#2f8f3a' : '#5b7384')}; }
`;
const ModeButton = styled.button`
  display: flex;
  align-items: center;
  justify-content: flex-end;
  gap: 13px;
  width: 103px;
  height: 15px;
  margin-left: auto;
  padding: 0 2px;
  border: 1px solid #fff;
  border-radius: 2px;
  background: #35566a;
  font-size: 8px;
`;
const Workspace = styled.div`
  flex: 1;
  min-height: 0;
  display: flex;
`;
const Navigator = styled.aside`
  flex: 0 0 209px;
  display: flex;
  flex-direction: column;
  background: #fff;
`;
const PanelHead = styled.div<{ $h: number }>`
  position: relative;
  flex: none;
  display: flex;
  align-items: center;
  justify-content: space-between;
  height: ${p => p.$h}px;
  padding: 0 5px 0 3px;
  background: #4b6c80;
  color: #fff;
  font-family: ${HEAD};
  font-size: 11px;
  font-weight: 600;
`;
const Dots = styled.span`
  position: absolute;
  left: 50%;
  top: 2px;
  width: 11px;
  height: 2px;
  margin-left: -5px;
  background: repeating-linear-gradient(90deg, #dbe6ee 0 2px, transparent 2px 4px);
`;
const NavRow = styled.div`
  flex: none;
  display: flex;
  align-items: center;
  height: 17px;
  padding-left: 2px;
  background: #dde5ea;
`;
const PlayButton = styled.button`
  display: grid;
  place-items: center;
  width: 35px;
  height: 11px;
  border: 1px solid #2c516b;
  border-radius: 2px;
  background: linear-gradient(#cfe8f8, #a3cde8);
`;
const Tree = styled.ul`
  flex: none;
  height: 354px;
  display: flex;
  flex-direction: column;
`;
const TreeRow = styled.li<{ $level: number; $tone?: 'blue' | 'head' | 'sel' }>`
  flex: 1;
  min-height: 0;
  display: flex;
  align-items: center;
  padding-left: ${p => p.$level * 13}px;
  background: ${p => (p.$tone === 'head' ? '#4b6c80' : p.$tone === 'sel' ? '#b3c3ca' : p.$tone === 'blue' ? '#e2eef6' : '#fff')};
  color: ${p => (p.$tone === 'head' ? '#fff' : '#1a1a1a')};
  white-space: nowrap;
  label, span.text { margin-left: 2px; ${p => p.$tone === 'head' && css`outline: 1px dotted #1a2c38; outline-offset: -1px;`} }
`;
const Twisty = styled.span`
  flex: none;
  display: grid;
  place-items: center;
  width: 13px;
  padding-left: 3px;
`;
const Check = styled.input`
  appearance: none;
  flex: none;
  position: relative;
  width: 8px;
  height: 8px;
  margin: 0 2px 0 1px;
  border: 1px solid #2b5078;
  background: #fff;
  &:checked { background: #2b5f96; }
  &:checked::after {
    content: '';
    position: absolute;
    left: 2px;
    top: 0;
    width: 2px;
    height: 4px;
    border: solid #fff;
    border-width: 0 1px 1px 0;
    transform: rotate(40deg);
  }
`;

type Node = [level: number, twisty: '' | '>' | 'v' | '-', check: '' | 'o' | 'x', icon: string, text: string];
const nodes: Node[] = [
  [0, '-', '', 'folder', 'Project'],
  [0, '', '', 'gear', 'Sequencer Properties...'],
  [0, '>', '', 'folder', 'Pre-Sequence Steps'],
  [0, 'v', 'x', 'sigpath', 'Signal Path1'],
  [1, 'v', 'x', 'folder', 'Signal Path Setup'],
  [2, '', '', 'gear', 'Measurement Sequence Settings...'],
  [2, '>', '', 'folder', 'Sequence Steps'],
  [2, '', 'o', 'dot', 'RMS Level'],
  [2, '', 'o', 'none', 'RMS Level (AC+DC)'],
  [2, '', 'o', 'none', 'Gain'],
  [2, '', 'o', 'dot', 'THD+N Ratio'],
  [2, '', 'o', 'dot', 'Frequency'],
  [2, '', 'o', 'none', 'Bits'],
  [2, '', 'o', 'none', 'Error Rate'],
  [1, '>', 'o', 'folder', 'Level and Gain'],
  [1, '>', 'o', 'folder', 'THD+N'],
  [1, '>', 'o', 'none', 'Frequency Response'],
  [1, 'v', 'o', 'folderLight', 'Signal to Noise Ratio'],
  [2, '', '', 'gear', 'Measurement Sequence Settings...'],
  [2, '>', '', 'folder', 'Sequence Steps'],
  [2, '', 'o', 'dot', 'Signal to Noise Ratio'],
  [1, '>', 'o', 'none', 'Crosstalk, One Channel Undriven'],
  [1, '>', 'o', 'folder', 'Interchannel Phase'],
  [1, '', '', 'meas', 'Add Measurement...'],
  [0, '', '', 'path', 'Add Signal Path'],
  [0, 'v', '', 'folder', 'Post-Sequence Steps'],
  [1, '', '', 'plus', 'Add Step...'],
  [1, '', 'x', 'report', 'Report'],
  [1, '', 'o', 'data', 'Data Output'],
];

const NodeIcon = ({ name }: { name: string }) => {
  if (name === 'folder' || name === 'folderLight') return <FolderIcon light={name === 'folderLight'} />;
  if (name === 'dot') return <DotIcon />;
  if (name === 'none') return <NoneIcon />;
  return <Dark name={name} bg={['sigpath', 'report', 'data'].includes(name) ? '#c3d0d8' : undefined} />;
};

const NavTree = () => (
  <Tree>
    {nodes.map(([lvl, tw, check, icon, text], i) => {
      const tone = i === 17 ? 'head' : i === 20 ? 'sel' : i > 2 && i < 24 ? 'blue' : undefined;
      const fill = tone === 'head' ? '#fff' : '#1a1a1a';
      return (
        <TreeRow key={i} $level={lvl} $tone={tone}>
          {tw !== '-' && (
            <Twisty>
              {tw === '>' && <svg width="4" height="5" viewBox="0 0 4 5"><path d="M0 0l4 2.500L0 5z" fill={fill} /></svg>}
              {tw === 'v' && <svg width="5" height="3" viewBox="0 0 5 3"><path d="M0 0h5L2.500 3z" fill={fill} /></svg>}
            </Twisty>
          )}
          {check && <Check id={`node${i}`} type="checkbox" defaultChecked={check === 'x'} />}
          <NodeIcon name={icon} />
          {check ? <label htmlFor={`node${i}`}>{text}</label> : <span className="text">{text}</span>}
        </TreeRow>
      );
    })}
  </Tree>
);

const Monitors = styled.section`
  flex: none;
  background: #fff;
`;
const MonitorTools = styled.div`
  display: flex;
  align-items: center;
  height: 17px;
  padding: 0 2px;
  background: #dde5ea;
`;
const ScopeBox = styled.figure`
  position: relative;
  display: grid;
  grid-template-columns: 31px 1fr 21px;
  grid-template-rows: 12px 117px 12px;
  margin: 0;
  height: 153px;
  text-align: center;
  figcaption { grid-column: 2; line-height: 12px; font-family: ${HEAD}; }
  svg { grid-column: 2; }
`;

const noise = (seed: number) => {
  let s = seed;
  const rnd = () => { s = (s * 16807) % 2147483647; return s / 2147483647; };
  let d = 'M0 58.5';
  for (let i = 1; i < 330; i++) {
    const peak = rnd() > 0.95 ? 1.35 : 1;
    const amp = (5 + rnd() * 14) * peak * (i % 2 ? -1 : 1);
    d += `L${(i * 157 / 330).toFixed(2)} ${(58.5 + amp).toFixed(1)}`;
  }
  return d;
};
const blueNoise = noise(4127);
const redNoise = noise(90871);

const Scope = () => (
  <ScopeBox>
    <figcaption>Scope</figcaption>
    <FillSvg>
      <rect width="100%" height="100%" fill="#fff" />
      {Array.from({ length: 10 }, (_, i) => <line key={i} x1={`${i * 9.2 + 9.2}%`} x2={`${i * 9.2 + 9.2}%`} y1="0" y2="100%" stroke={i % 2 ? '#cfcfcf' : '#ececec'} />)}
      {Array.from({ length: 9 }, (_, i) => <line key={i} x1="0" x2="100%" y1={`${i * 10 + 10}%`} y2={`${i * 10 + 10}%`} stroke={i % 2 ? '#ececec' : '#cfcfcf'} />)}
      <svg width="100%" height="100%" viewBox="0 0 157 117" preserveAspectRatio="none">
        <path d={blueNoise} fill="none" stroke="#2d4b92" strokeWidth=".700" />
        <path d={redNoise} fill="none" stroke="#bb262c" strokeWidth=".600" />
        <path d="M83 58V24M7 58V88M51 58V89" stroke="#c8484c" strokeWidth=".800" />
      </svg>
      <rect width="100%" height="100%" fill="none" stroke="#8a8a8a" />
      <g fontSize="8" fill="#222" fontFamily={UI}>
        {['8u', '4u', '0', '-4u', '-8u'].map((t, i) => <text key={t} x="0" dx="-3" y={`${i * 20 + 10}%`} dy="3" textAnchor="end">{t}</text>)}
        {['0', '40m', '80m', '120m', '160m', '200m'].map((t, i) => <text key={t} x={`${i * 18.4}%`} y="100%" dy="9" textAnchor="middle">{t}</text>)}
        <text x="50%" y="100%" dy="19" textAnchor="middle">Time (s)</text>
        <text transform="translate(-18 58) rotate(-90)" textAnchor="middle">Instantaneous Level (V)</text>
      </g>
    </FillSvg>
  </ScopeBox>
);

const Divider = styled.div`
  flex: none;
  width: 5px;
  background: #4b6c80;
  display: grid;
  place-items: center;
  padding-left: 1px;
  i { width: 2px; height: 10px; background: repeating-linear-gradient(#dbe6ee 0 2px, transparent 2px 4px); }
`;
const Measure = styled.section`
  flex: 1;
  min-width: 0;
  display: flex;
  flex-direction: column;
`;
const MeasureHead = styled.div`
  flex: none;
  display: flex;
  align-items: center;
  gap: 8px;
  height: 17px;
  padding-left: 4px;
  color: #fff;
  font-family: ${HEAD};
  font-size: 11px;
  font-weight: 600;
`;
const MeasureBody = styled.div`
  flex: 1;
  min-height: 0;
  display: flex;
  gap: 1px;
`;
const Settings = styled.form`
  flex: 0 0 227px;
  padding: 4px 2px 0 3px;
  background: #b3c3cc;
`;
const StartButton = styled.button`
  display: flex;
  align-items: center;
  justify-content: center;
  gap: 5px;
  width: 95px;
  height: 18px;
  border: 2px solid #2c516b;
  border-radius: 2px;
  outline: 1px dotted #1b3b4f;
  outline-offset: -4px;
  background: linear-gradient(#c4e2f4, #a8d0e8);
  color: #1b3b4f;
  font-family: ${HEAD};
  font-size: 9px;
  font-weight: 600;
`;
const Rule = styled.hr`
  height: 2px;
  margin: 4px 0 0;
  border: 0;
  border-top: 1px solid #98a8b2;
  background: #dbe4e9;
`;
const SectionTitle = styled.h2`
  font-family: ${HEAD};
  font-weight: 700;
  font-size: 8px;
  line-height: 12px;
  &::before { content: '▪ '; font-size: 6px; }
`;
const NoteBox = styled.div`
  display: flex;
  justify-content: space-between;
  width: 136px;
  height: 26px;
  padding: 2px 3px;
  border: 1px solid #87969f;
  background: #f4f4f4;
  line-height: 10px;
`;
const Steppers = styled.div`
  display: flex;
  flex-direction: column;
  justify-content: space-around;
`;
const FieldGroup = styled.div`
  display: grid;
  row-gap: 3px;
  padding: 3px 0 4px;
`;
const Field = styled.div`
  display: grid;
  grid-template-columns: 70px 82px 55px;
  align-items: center;
  column-gap: 5px;
  label { text-align: right; padding-right: 1px; }
`;
const TextField = styled.input`
  width: 55px;
  height: 15px;
  padding-left: 2px;
  border: 1px solid #6d7d87;
  background: #fff;
`;
const AdvButton = styled.button`
  display: block;
  width: 84px;
  height: 16px;
  margin-top: 3px;
  border: 1px solid #98a6ae;
  background: #e4e6e7;
`;
const Chevron = ({ up }: { up?: boolean }) => (
  <svg width="6" height="4" viewBox="0 0 6 4" aria-hidden="true"><path d={up ? 'M.5 3.500L3 1l2.500 2.500' : 'M.5.5L3 3 5.500.5'} fill="none" stroke="#333" /></svg>
);

const GraphPane = styled.div`
  flex: 1;
  min-width: 0;
  display: flex;
  flex-direction: column;
  background: #fff;
`;
const GraphTools = styled.div`
  flex: none;
  display: flex;
  align-items: center;
  height: 16px;
  padding: 0 5px 0 1px;
  background: #dbe3e8;
`;
const GraphTitle = styled.h2`
  flex: none;
  padding-right: 62px;
  font-size: 9px;
  line-height: 9px;
  text-align: center;
`;
const GraphDate = styled.p`
  flex: none;
  padding-right: 99px;
  line-height: 13px;
  text-align: right;
`;
const PlotArea = styled.div`
  flex: 1;
  min-height: 0;
  display: flex;
  padding: 1px 98px 32px 36px;
`;

const bars = [
  { name: 'Ch1', value: 92.612, y: 30, fill: '#2d4b8c' },
  { name: 'Ch2', value: 92.77, y: 70, fill: '#c93c3a' },
];

const BarChart = () => (
  <PlotArea>
    <FillSvg fontFamily={HEAD} fontSize="14" fill="#2a2a2a">
      {Array.from({ length: 13 }, (_, i) => <line key={i} x1={`${(i + 1) * 100 / 14}%`} x2={`${(i + 1) * 100 / 14}%`} y1="0" y2="100%" stroke={i % 2 ? '#d6d6d6' : '#eeeeee'} />)}
      {bars.map(b => (
        <g key={b.name}>
          <rect x="0" y={`${b.y - 12.6}%`} width={`${b.value / 1.4}%`} height="25.200%" fill={b.fill} fillOpacity=".870" stroke={b.fill} strokeOpacity=".600" />
          <line x1="0" x2="100%" y1={`${b.y}%`} y2={`${b.y}%`} stroke="#000" strokeOpacity=".140" />
          <text x="0" dx="-4" y={`${b.y}%`} dy="5" textAnchor="end">{b.name}</text>
          <svg x="100%" y={`${b.y}%`} overflow="visible">
            <rect x="3" y="-6" width="11" height="11" fill={b.fill} fillOpacity=".870" />
            <text x="26" y="5">{b.value.toFixed(3)} dB</text>
          </svg>
        </g>
      ))}
      <rect width="100%" height="100%" fill="none" stroke="#909090" />
      {Array.from({ length: 8 }, (_, i) => <text key={i} x={`${i * 100 / 7}%`} y="100%" dy="17" textAnchor="middle">{i * 20}</text>)}
      <text x="50%" y="100%" dy="28" fontSize="8" textAnchor="middle" fontFamily={UI}>Signal to Noise Ratio (dB)</text>
      <svg x="100%" overflow="visible">
        <g fill="none" stroke="#1f74b4">
          <path d="M-22 15l5-8h1l1 8M-20 12h5M-13 17l1.500-8M-12 10c3-2 5 0 3 3-1 2-3 2-4 1" strokeWidth="1.500" />
          <path d="M-14 6c9-2 10 9 2 11M-11 5c8 2 7 9 0 12" strokeWidth="1" />
        </g>
      </svg>
    </FillSvg>
  </PlotArea>
);

const Thumbs = styled.div`
  flex: none;
  height: 53px;
  padding: 5px 0 0 2px;
`;
const Thumb = styled.a`
  display: flex;
  flex-direction: column;
  align-items: center;
  width: 81px;
  svg { border: 1px solid #35566a; border-bottom: 0; width: 59px; height: 36px; }
  span { width: 81px; background: #426981; color: #fff; line-height: 11px; text-align: center; }
`;
const ApxStatus = styled.footer`
  flex: none;
  display: flex;
  align-items: center;
  justify-content: flex-end;
  gap: 4px;
  height: 16px;
  padding-right: 2px;
  background: #f0f0f0;
`;
const Chip = styled.output<{ $gap?: boolean }>`
  margin-left: ${p => (p.$gap ? 1 : -1)}px;
  padding: 0 3px 1px;
  background: #000;
  color: #12d21c;
  font-family: ${HEAD};
  line-height: 10px;
`;

const ApxWindow = () => (
  <Apx>
    <TitleBar $h={20}><ApLogo size={11} /><h1>Project - APx500 v6.0.2</h1><WinControls /></TitleBar>
    <MenuBand>
      <MenuRow>{['File', 'View', 'Measurements', 'Project', 'Window', 'Help'].map(m => <PlainButton key={m}>{m}</PlainButton>)}</MenuRow>
      <ToolLine>
        <Strip $w={64}>
          <svg width="10" height="11" viewBox="0 0 10 11" aria-hidden="true"><path d="M0 0h7l3 3v8H0z" fill="#e4ebef" /><path d="M2 4h6M2 6h6M2 8h6" stroke="#1b3b4f" /></svg>
          <Caret color="#1b3b4f" /><Dark name="open" /><Dark name="save" /><Dark name="gear" />
        </Strip>
        <Sep $m={4} $c="#dce6ec" />
        <Strip $w={120}>{['sine', 'fft', 'list', 'square', 'port', 'bt', 'pulses', 'sineUp'].map(n => <Dark key={n} name={n} />)}</Strip>
        <Sep $m={4} $c="#dce6ec" />
        <svg width="9" height="10" viewBox="0 0 9 10" aria-hidden="true"><path d="M0 3h2l3-3v10L2 7H0z" fill="#2d4a5c" /><path d="M6 2.500c2 2 2 3 0 5" stroke="#c8d8e2" fill="none" /></svg>
        <Strip $ml={3}>Audible Monitor</Strip>
        <Toggle $ml={9}><i />OFF</Toggle>
        <ModeButton>Sequence Mode<svg width="7" height="7" viewBox="0 0 7 7"><path d="M0 0h7L3.500 7z" fill="#fff" /></svg></ModeButton>
      </ToolLine>
    </MenuBand>
    <Workspace>
      <Navigator>
        <PanelHead $h={19}>Navigator
          <svg width="8" height="9" viewBox="0 0 8 9" aria-hidden="true"><path d="M1 0v9M3 4.500h5M5.500 2v5" stroke="#fff" /></svg>
        </PanelHead>
        <NavRow>
          <label htmlFor="seq">Sequence:</label>
          <Strip $ml={4}>
            <SelectWrap $w={63} $h={15} $right={2}><BareSelect id="seq" $bg="#fff"><option>Sequence 1</option></BareSelect><Caret /></SelectWrap>
          </Strip>
          <Strip $w={27} $ml={3}><Dark name="gear" /><Dark name="copyp" /></Strip>
          <Strip $ml={54} $w={17}><Dark name="help" bg="#1f3c78" /><Caret /></Strip>
        </NavRow>
        <NavRow>
          <PlayButton aria-label="Run sequence"><svg width="5" height="6" viewBox="0 0 5 6"><path d="M0 0l5 3-5 3z" fill="#1b3b4f" /></svg></PlayButton>
          <Strip $w={42} $ml={7}><Dark name="path" /><Dark name="meas" /><Dark name="x" /></Strip>
          <Sep $m={4} />
          <Strip $w={26}><Dark name="copyp" /><Dark name="pagePlus" bg="#aab6be" /></Strip>
        </NavRow>
        <NavTree />
        <Workspace />
        <Monitors>
          <PanelHead $h={24}><Dots />Monitors/Meters<PopOut color="#fff" /></PanelHead>
          <MonitorTools>
            <Strip $w={136}>{['sine', 'fft', 'inout', 'square', 'port', 'bt', 'pulses', 'sineUp', 'list'].map((n, i) => <Dark key={n} name={n} ring={i === 0} />)}</Strip>
            <Sep $m={3} />
            <Toggle $on $ml={1}>ON<i /></Toggle>
          </MonitorTools>
          <Scope />
        </Monitors>
      </Navigator>
      <Divider><i /></Divider>
      <Measure>
        <MeasureHead>
          <svg width="6" height="9" viewBox="0 0 6 9" aria-hidden="true"><path d="M5 .5L1 4.500l4 4" stroke="#fff" strokeWidth="1.400" fill="none" /></svg>
          Signal to Noise Ratio
        </MeasureHead>
        <MeasureBody>
          <Settings onSubmit={e => e.preventDefault()}>
            <StartButton><svg width="7" height="8" viewBox="0 0 7 8"><path d="M0 0l7 4-7 4z" fill="#1b3b4f" /></svg>Start</StartButton>
            <Rule />
            <SectionTitle>External Source</SectionTitle>
            <NoteBox>
              <p>Refer to the Help file for<br />information about compatible</p>
              <Steppers><PlainButton type="button" aria-label="Scroll up"><Chevron up /></PlainButton><PlainButton type="button" aria-label="Scroll down"><Chevron /></PlainButton></Steppers>
            </NoteBox>
            <Rule />
            <SectionTitle>Analyzer</SectionTitle>
            <FieldGroup>
              <Field>
                <label htmlFor="hp">High-pass Filter:</label>
                <SelectWrap $h={15}><BareSelect id="hp" $bg="#e4e6e7" $border="#98a6ae" $pad={2}><option>Elliptic</option></BareSelect><Chevron /></SelectWrap>
                <TextField aria-label="High-pass frequency" defaultValue="20 Hz" />
              </Field>
              <Field>
                <label htmlFor="lp">Low-pass Filter:</label>
                <SelectWrap $h={15}><BareSelect id="lp" $bg="#e4e6e7" $border="#98a6ae" $pad={2}><option>Elliptic</option></BareSelect><Chevron /></SelectWrap>
                <TextField aria-label="Low-pass frequency" defaultValue="20 kHz" />
              </Field>
              <Field>
                <label htmlFor="wt">Weighting:</label>
                <SelectWrap $h={15}><BareSelect id="wt" $bg="#e4e6e7" $border="#98a6ae" $pad={2}><option>Signal Path</option></BareSelect><Chevron /></SelectWrap>
              </Field>
            </FieldGroup>
            <Rule />
            <AdvButton type="button">Advanced Settings...</AdvButton>
          </Settings>
          <GraphPane>
            <GraphTools>
              <Strip $w={42}><Dark name="save" /><Dark name="copyp" /><Dark name="print" /></Strip>
              <Sep $m={4} />
              <Strip $w={42}><Dark name="zoom" /><Dark name="fit" /><Dark name="expand" /></Strip>
              <Sep $m={4} />
              <Strip $w={62}><Dark name="table" /><Dark name="graph" /><Caret /><Dark name="fx" /><Dark name="gear" /></Strip>
              <Sep $m={4} />
              <label htmlFor="unit">Unit</label>
              <Strip $ml={3}><SelectWrap $w={28} $h={14} $right={2}><BareSelect id="unit" $bg="#fff" $pad={2}><option>dB</option></BareSelect><Caret /></SelectWrap></Strip>
              <WindowButtons><PopOut color="#16357a" /></WindowButtons>
            </GraphTools>
            <GraphTitle>Signal to Noise Ratio</GraphTitle>
            <GraphDate>2021-04-13 오후 1:18:00.546</GraphDate>
            <BarChart />
            <GraphTools>
              <Strip $w={26}><Dark name="first" bg="#a3a9ad" /><Dark name="last" bg="#a3a9ad" /></Strip>
              <Sep $m={4} />
              <Strip $w={35}><PlainButton><Dark name="plus" />Add</PlainButton><Caret /></Strip>
              <Strip $w={45} $ml={4}><PlainButton><Dark name="x" />Delete</PlainButton><Caret /></Strip>
              <Strip $w={47} $ml={3}><PlainButton><Dark name="sort" />Sort By</PlainButton><Caret /></Strip>
              <Strip $ml={3}><PlainButton><Dark name="gear" />Details</PlainButton></Strip>
              <WindowButtons><svg width="9" height="8" viewBox="0 0 9 8" aria-hidden="true"><path d="M4.500 0L8 4H5.500v1h-2V4H1zM0 6.500h9V8H0z" fill="#16357a" /></svg></WindowButtons>
            </GraphTools>
            <Thumbs>
              <Thumb href="#snr">
                <svg viewBox="0 0 59 36" aria-hidden="true">
                  <rect x="15" y="1.500" width="28" height="31" fill="#fff" stroke="#8fa3b0" />
                  <path d="M37 2v30M40 2v30" stroke="#eee" /><path d="M31 11h12M31 22h12" stroke="#bbb" />
                  <rect x="16" y="7" width="14" height="7" fill="#44609f" /><rect x="16" y="18" width="14" height="7" fill="#d04c4a" />
                </svg>
                <span>Signal to Noise Ratio</span>
              </Thumb>
            </Thumbs>
          </GraphPane>
        </MeasureBody>
      </Measure>
    </Workspace>
    <ApxStatus>
      Output: <Chip $gap>External</Chip> Input 1: <Chip $gap>Analog Unbalanced 2 Ch, 100 kohm</Chip><Chip>310.0 mVrms</Chip><Chip>AC (&lt;10 Hz) - 20 kHz</Chip> Input 2: <Chip $gap>None</Chip>
      <svg width="8" height="8" viewBox="0 0 8 8" aria-hidden="true"><path d="M6 0h1.500v1.500H6zM6 3h1.500v1.500H6zM6 6h1.500v1.500H6zM3 3h1.500v1.500H3zM3 6h1.500v1.500H3zM0 6h1.500v1.500H0z" fill="#aaa" /></svg>
    </ApxStatus>
  </Apx>
);

/* ---------- taskbar ---------- */

const Taskbar = styled.footer`
  flex: none;
  display: flex;
  align-items: stretch;
  height: 27px;
  background: #1b1b1b;
  color: #f0f0f0;
`;
const TaskButton = styled.button<{ $w?: number; $on?: boolean; $open?: boolean }>`
  flex: none;
  width: ${p => p.$w ?? 33}px;
  display: grid;
  place-items: center;
  border: 0;
  border-bottom: ${p => (p.$open ? '2px solid #76b9ed' : '0')};
  background: ${p => (p.$on ? '#454545' : 'none')};
`;
const Search = styled.label`
  display: flex;
  align-items: center;
  gap: 8px;
  width: 232px;
  padding-left: 7px;
  background: #f3f3f3;
  color: #333;
`;
const SearchInput = styled.input`
  flex: 1;
  min-width: 0;
  border: 0;
  background: none;
  outline: 0;
  font-family: "Noto Sans CJK KR", sans-serif;
  font-size: 11px;
  line-height: 16px;
  &::placeholder { color: #333; opacity: 1; }
`;
const Tray = styled.div`
  display: flex;
  align-items: center;
  gap: 4px;
  margin-left: auto;
  padding-right: 12px;
`;
const Clock = styled.time`
  width: 57px;
  padding-right: 4px;
  text-align: center;
  line-height: 12px;
  font-size: 9px;
`;

const WindowsTaskbar = () => (
  <Taskbar>
    <TaskButton aria-label="Start"><svg width="12" height="12" viewBox="0 0 12 12"><path d="M0 1.700L5.300 1v4.700H0zM6 .9L12 0v5.700H6zM0 6.400h5.300V11L0 10.300zM6 6.400h6V12l-6-.9z" fill="#f2f2f2" /></svg></TaskButton>
    <Search>
      <svg width="12" height="12" viewBox="0 0 12 12"><circle cx="7.500" cy="4.500" r="3.700" fill="none" stroke="#333" /><path d="M5 7.200L.7 11.500" stroke="#333" /></svg>
      <SearchInput aria-label="Search" placeholder="검색하려면 여기에 입력하십시오." />
    </Search>
    <TaskButton aria-label="Cortana"><svg width="12" height="12" viewBox="0 0 12 12"><circle cx="6" cy="6" r="4.600" fill="none" stroke="#f2f2f2" strokeWidth="1.500" /></svg></TaskButton>
    <TaskButton aria-label="Task view"><svg width="12" height="12" viewBox="0 0 12 12"><path d="M.5 0v2h7V0M.5 12v-2h7v2M.5 4h7v4h-7zM10.500 0v12" fill="none" stroke="#e4e4e4" /><path d="M9.500 3.500h2v2h-2z" fill="#fff" /></svg></TaskButton>
    <TaskButton $w={34} aria-label="File Explorer"><svg width="16" height="14" viewBox="0 0 16 14"><path d="M0 1h6l1 2h9v10H0z" fill="#f2b928" /><path d="M0 4h16v9H0z" fill="#fcdc70" /><path d="M3 13V8h10v5h-3v-2H6v2z" fill="#3d9be0" /></svg></TaskButton>
    <TaskButton aria-label="Chrome">
      <svg width="16" height="16" viewBox="0 0 16 16"><circle cx="8" cy="8" r="7.500" fill="#fbc116" /><path d="M8 8L1.500 4.200a7.500 7.500 0 0 1 13 0H8z" fill="#e33b2e" /><path d="M1.500 4.200L5 10.500 8 15.500A7.500 7.500 0 0 1 1.500 4.200z" fill="#2da24c" /><circle cx="8" cy="8" r="3.600" fill="#fff" /><circle cx="8" cy="8" r="2.800" fill="#4285f4" /></svg>
    </TaskButton>
    <TaskButton aria-label="Edge">
      <svg width="16" height="16" viewBox="0 0 16 16"><circle cx="8" cy="8" r="7.500" fill="#1273c4" /><path d="M.6 7.500C1.500-1 14.500-1.500 15.500 7c0 3-3 4-5.500 3.200 1.500-2.200.5-4.700-2.500-4.700C4 5.500 1 6 .6 7.500z" fill="#3ec8a0" /><path d="M.6 7.500C2 2 9 3 9.500 7 6 5.500 4 10 7 13c2 2 5 1.500 6.500.5C9 18 .5 15 .6 7.500z" fill="#1b9de2" /></svg>
    </TaskButton>
    <TaskButton $open aria-label="Adobe Audition"><AuditionLogo size={16} /></TaskButton>
    <TaskButton $open $on aria-label="APx500"><ApLogo size={16} /></TaskButton>
    <Tray>
      <svg width="9" height="6" viewBox="0 0 9 6"><path d="M.5 5l4-4 4 4" fill="none" stroke="#eee" strokeWidth="1.200" /></svg>
      <svg width="13" height="11" viewBox="0 0 13 11"><path d="M4 2.500h8v5.500H3.500V5M6 10.500h5M1 .5h3v3.500H1zM2.500 4v6.500" fill="none" stroke="#e8e8e8" /></svg>
      <svg width="13" height="11" viewBox="0 0 13 11"><path d="M.5 4h2L5 1.500v8L2.500 7h-2zM7 4c1 1 1 2 0 3M8.800 2.500c1.800 2 1.800 4 0 6M10.500 1c2.500 3 2.500 6 0 9" fill="none" stroke="#e8e8e8" /></svg>
      <svg width="11" height="11" viewBox="0 0 11 11"><circle cx="5.500" cy="5.500" r="4.500" fill="#555" stroke="#ccc" /><path d="M3.500 3.500l4 4M7.500 3.500l-4 4" stroke="#ddd" strokeWidth="1.300" /></svg>
      <Clock>오후 1:18<br />2021-04-13</Clock>
      <svg width="18" height="18" viewBox="0 0 18 18" aria-label="2 notifications"><path d="M1 1h11v9H6l-2.500 2.500V10H1z" fill="#f2f2f2" /><path d="M3 3.500h7M3 5.500h7M3 7.500h5" stroke="#333" /><circle cx="11.500" cy="11.500" r="5.500" fill="#333" stroke="#aaa" /><text x="11.500" y="14.500" fontSize="8" fill="#fff" textAnchor="middle">2</text></svg>
    </Tray>
  </Taskbar>
);

export default function App() {
  return (
    <Desktop>
      <Global />
      <TopEdge />
      <Windows>
        <AuditionWindow />
        <ApxWindow />
      </Windows>
      <WindowsTaskbar />
    </Desktop>
  );
}
